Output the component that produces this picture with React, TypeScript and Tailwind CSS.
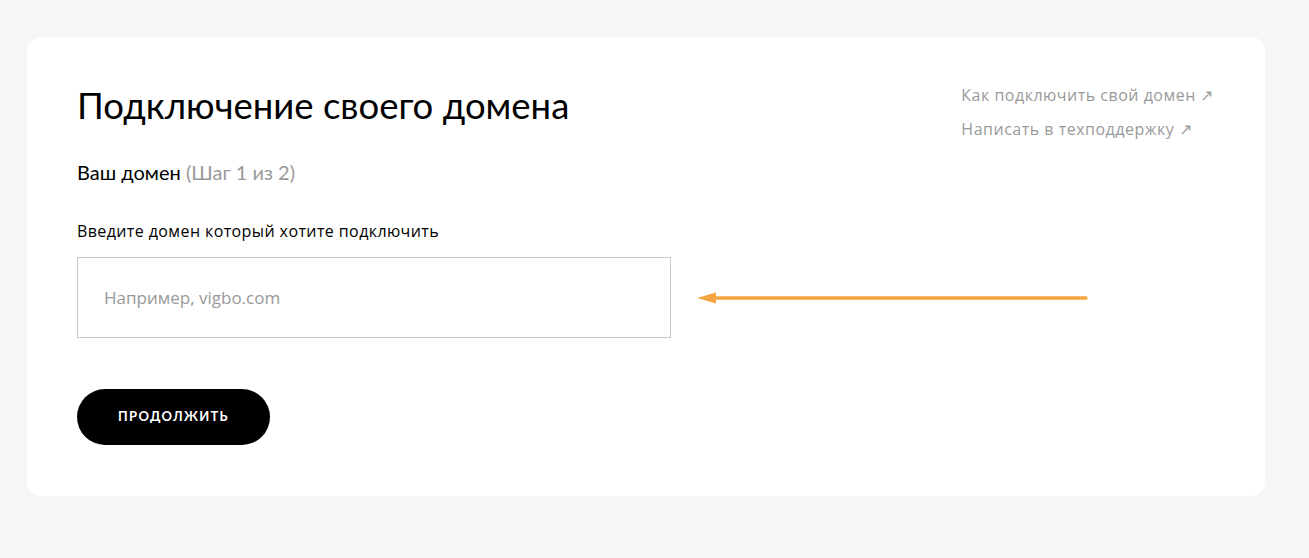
export default function App() {
  return (
    <main className="min-h-[558px] bg-[#f6f6f6] pl-[27px] pr-[44px] pt-[37px] font-['Lato',sans-serif]">
      <section className="flex h-[459px] justify-between rounded-[14px] bg-white pl-[50px] pr-[51px] pt-[44px]">
        <div className="flex min-w-0 flex-col">
          <h1 className="text-[36.5px] leading-[48px] text-black">Подключение своего домена</h1>
          <p className="mt-[31px] text-[20px] leading-[24px] text-black">
            Ваш домен <span className="text-[#999]">(Шаг 1 из 2)</span>
          </p>
          <label className="mt-[37px] font-['Open_Sans',sans-serif] text-[16px] leading-[20px] tracking-[0.4px] text-black">
            Введите домен который хотите подключить
          </label>
          <div className="relative mt-[16px]">
            <input
              className="h-[81px] w-[594px] border border-[#c8c8c8] px-[26px] font-['Open_Sans',sans-serif] text-[17px] outline-none placeholder:text-[#999]"
              placeholder="Например, vigbo.com"
            />
            {/* annotation arrow pointing at the field */}
            <svg width="392" height="14" viewBox="0 0 392 14" className="absolute left-[620px] top-[34px]">
              <path d="M16 7 H389" stroke="#f2a541" strokeWidth="3.5" strokeLinecap="round" />
              <path d="M0 7 L19 1.5 L19 12.5 Z" fill="#f2a541" />
            </svg>
          </div>
          <button className="mt-[51px] h-[56px] w-[193px] rounded-full bg-black text-[13px] font-bold uppercase tracking-[1.3px] text-white">
            Продолжить
          </button>
        </div>
        <div className="flex shrink-0 flex-col gap-[12px] whitespace-nowrap pt-[3px] font-['Open_Sans',sans-serif] text-[16px] leading-[22px] tracking-[0.5px] text-[#9a9a9a]">
          <a href="#">Как подключить свой домен ↗</a>
          <a href="#">Написать в техподдержку ↗</a>
        </div>
      </section>
    </main>
  );
}
